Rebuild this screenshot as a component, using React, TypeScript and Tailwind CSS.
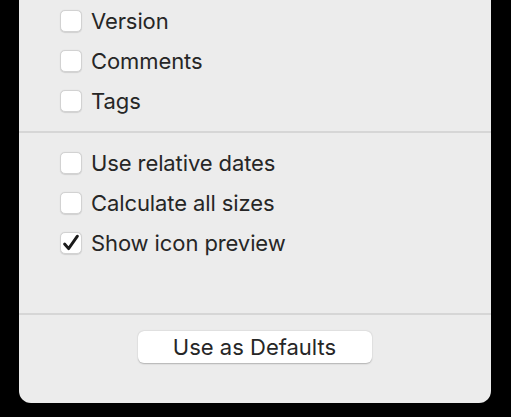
const Checkbox = ({ checked }: { checked?: boolean }) => {
  return (
    <div className="w-[22px] h-[22px] rounded-[5px] bg-white border border-[#d2d2d2] shadow-[0_0.5px_1px_rgba(0,0,0,0.12)] flex items-center justify-center shrink-0">
      {checked && (
        <svg width="18" height="18" viewBox="0 0 18 18" fill="none">
          <path d="M2.6 10 L6.6 14.6 L15.4 2.2" stroke="#1a1a1a" strokeWidth="2.9" strokeLinecap="round" strokeLinejoin="round" />
        </svg>
      )}
    </div>
  );
};

const Row = ({ label, checked }: { label: string; checked?: boolean }) => {
  return (
    <div className="h-[40px] flex items-center pl-[41px] gap-[9px]">
      <Checkbox checked={checked} />
      <span className="text-[22px] text-[#262626] leading-none tracking-[-0.1px]">{label}</span>
    </div>
  );
};

export default function App() {
  return (
    <div className="w-[511px] h-[417px] bg-black" style={{ fontFamily: "Inter, 'Noto Sans', sans-serif" }}>
      <div className="ml-[19px] w-[472px] h-[403px] bg-[#ececec] rounded-b-[12px] flex flex-col pt-[1px]">
        <Row label="Version" />
        <Row label="Comments" />
        <Row label="Tags" />
        <div className="h-[2px] bg-[#d6d6d6] mt-[10px]"></div>
        <div className="pt-[10px]">
          <Row label="Use relative dates" />
          <Row label="Calculate all sizes" />
          <Row label="Show icon preview" checked />
        </div>
        <div className="h-[2px] bg-[#d6d6d6] mt-[50px]"></div>
        <div className="flex justify-center pt-[16px] pr-[1px]">
          <button className="w-[234px] h-[32px] bg-white rounded-[6px] shadow-[0_0.5px_1.5px_rgba(0,0,0,0.25)] text-[22px] text-[#262626] leading-none">
            Use as Defaults
          </button>
        </div>
      </div>
    </div>
  );
}
